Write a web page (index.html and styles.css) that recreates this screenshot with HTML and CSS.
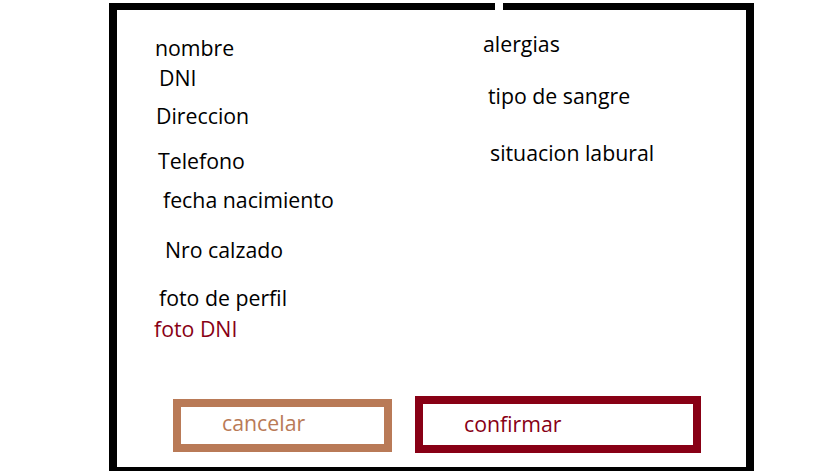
FILE: index.html
```html
<!DOCTYPE html>
<html lang="es">
<head>
<meta charset="utf-8">
<title>Formulario</title>
<link rel="stylesheet" href="styles.css">
</head>
<body>
<div class="frame">
  <div class="fields">
    <div class="col col-left">
      <div class="label l-nombre">nombre</div>
      <div class="label l-dni">DNI</div>
      <div class="label l-dir">Direccion</div>
      <div class="label l-tel">Telefono</div>
      <div class="label l-fecha">fecha nacimiento</div>
      <div class="label l-nro">Nro calzado</div>
      <div class="label l-perfil">foto de perfil</div>
      <div class="label l-fotodni">foto DNI</div>
    </div>
    <div class="col col-right">
      <div class="label r-alergias">alergias</div>
      <div class="label r-tipo">tipo de sangre</div>
      <div class="label r-sit">situacion labural</div>
    </div>
  </div>
  <div class="actions">
    <div class="btn btn-cancel">cancelar</div>
    <div class="btn btn-confirm">confirmar</div>
  </div>
</div>
</body>
</html>
```
FILE: styles.css
```css
html, body {
  margin: 0;
  padding: 0;
  background: #ffffff;
}

body {
  font-family: "Open Sans", "Noto Sans", sans-serif;
  font-size: 21.3px;
  line-height: 24px;
  color: #000000;
  overflow: hidden;
}

.frame {
  position: relative;
  box-sizing: border-box;
  margin: 3px 0 0 109px;
  width: 645px;
  height: 472px;
  border: 8px solid #000000;
  border-top-width: 7px;
  display: flex;
  flex-direction: column;
}

.frame::after {
  content: "";
  position: absolute;
  top: -7px;
  left: 378px;
  width: 8px;
  height: 8px;
  background: #ffffff;
}

.fields {
  flex: 1;
  display: flex;
}

.col-left {
  width: 328px;
  padding-left: 38px;
}

.col-right {
  flex: 1;
}

.label {
  white-space: nowrap;
}

.l-nombre { margin: 26px 0 0 0; }
.l-dni { margin: 6px 0 0 4px; }
.l-dir { margin: 14px 0 0 1px; }
.l-tel { margin: 21px 0 0 3px; }
.l-fecha { margin: 15px 0 0 8px; }
.l-nro { margin: 26px 0 0 10px; }
.l-perfil { margin: 24px 0 0 4px; }
.l-fotodni { margin: 7px 0 0 -1px; color: #880015; }

.r-alergias { margin: 22px 0 0 0; }
.r-tipo { margin: 28px 0 0 5px; }
.r-sit { margin: 33px 0 0 7px; }

.actions {
  display: flex;
  align-items: center;
  gap: 23px;
  padding-left: 56px;
  margin-bottom: 14px;
  height: 57px;
}

.btn {
  box-sizing: border-box;
  border: 8px solid;
  padding-left: 41px;
}

.btn-cancel {
  width: 219px;
  height: 53px;
  padding-top: 4px;
  border-color: #b97a57;
  color: #b97a57;
  margin-top: 2px;
}

.btn-confirm {
  width: 286px;
  height: 57px;
  padding-top: 8px;
  border-color: #880015;
  color: #880015;
}
```
